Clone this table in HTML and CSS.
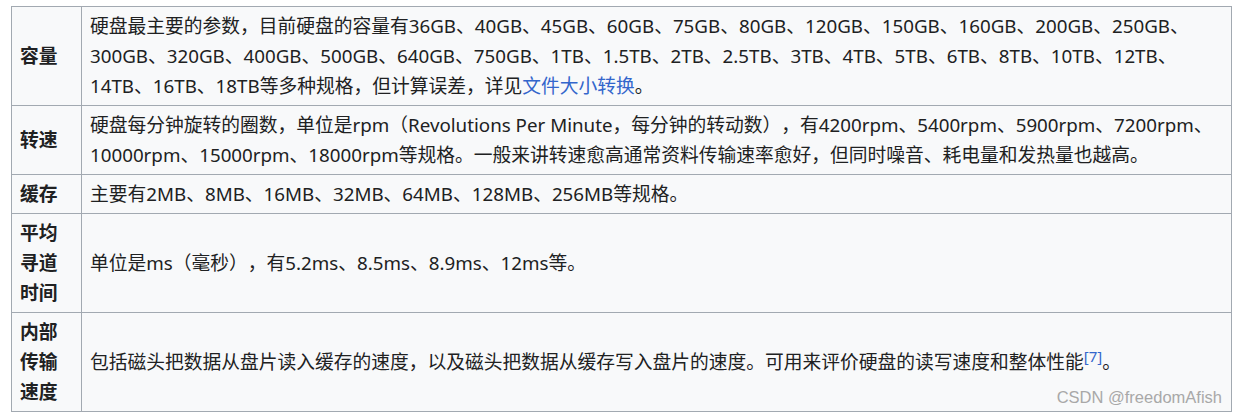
FILE: index.html
```html
<!DOCTYPE html>
<html lang="zh-CN">
<head>
    <meta charset="UTF-8">
    <title>硬盘参数</title>
    <link rel="stylesheet" href="styles.css">
</head>
<body>

<div class="page">
    <table class="wikitable">
        <tr>
            <th>容量</th>
            <td>硬盘最主要的参数，目前硬盘的容量有36GB、40GB、45GB、60GB、75GB、80GB、120GB、150GB、160GB、200GB、250GB、300GB、320GB、400GB、500GB、640GB、750GB、1TB、1.5TB、2TB、2.5TB、3TB、4TB、5TB、6TB、8TB、10TB、12TB、14TB、16TB、18TB等多种规格，但计算误差，详见<a href="#">文件大小转换</a>。</td>
        </tr>
        <tr>
            <th>转速</th>
            <td>硬盘每分钟旋转的圈数，单位是rpm（Revolutions Per Minute，每分钟的转动数），有4200rpm、5400rpm、5900rpm、7200rpm、10000rpm、15000rpm、18000rpm等规格。一般来讲转速愈高通常资料传输速率愈好，但同时噪音、耗电量和发热量也越高。</td>
        </tr>
        <tr>
            <th>缓存</th>
            <td>主要有2MB、8MB、16MB、32MB、64MB、128MB、256MB等规格。</td>
        </tr>
        <tr>
            <th>平均寻道时间</th>
            <td>单位是ms（毫秒），有5.2ms、8.5ms、8.9ms、12ms等。</td>
        </tr>
        <tr>
            <th>内部传输速度</th>
            <td>包括磁头把数据从盘片读入缓存的速度，以及磁头把数据从缓存写入盘片的速度。可用来评价硬盘的读写速度和整体性能<sup><a href="#">[7]</a></sup>。</td>
        </tr>
    </table>
    <div class="watermark">CSDN @freedomAfish</div>
</div>

</body>
</html>
```

FILE: styles.css
```css
body {
    margin: 0;
    background-color: #ffffff;
    font-family: 'Noto Sans', 'Noto Sans CJK SC', sans-serif;
    color: #202122;
}
.page {
    position: relative;
    padding: 6px 0 0 11px;
    width: 1221px;
}
.wikitable {
    width: 1221px;
    border-collapse: collapse;
    background-color: #f8f9fa;
    border: 1px solid #a2a9b1;
    font-size: 18.75px;
    line-height: 30px;
    text-spacing-trim: space-all;
}
.wikitable th,
.wikitable td {
    border: 1px solid #a2a9b1;
    padding: 4px 8px;
    vertical-align: middle;
}
.wikitable th {
    width: 53px;
    text-align: left;
    font-weight: bold;
    background-color: #f8f9fa;
}
.wikitable a {
    color: #3366cc;
    text-decoration: none;
}
.wikitable sup {
    font-size: 0.8em;
    line-height: 1;
    vertical-align: 0.5em;
}
.watermark {
    position: absolute;
    right: 10px;
    bottom: 5px;
    font-family: 'Liberation Sans', Arial, sans-serif;
    font-size: 16.5px;
    color: #a8a8a8;
}
```
